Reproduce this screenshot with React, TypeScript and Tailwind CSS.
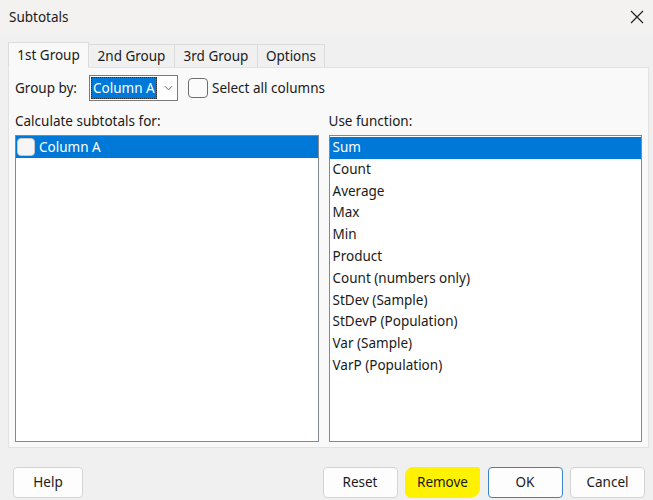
import { useState } from 'react'

const FUNCTIONS = [
  'Sum',
  'Count',
  'Average',
  'Max',
  'Min',
  'Product',
  'Count (numbers only)',
  'StDev (Sample)',
  'StDevP (Population)',
  'Var (Sample)',
  'VarP (Population)',
]

const TABS = [
  ['1st Group', 'w-[81px]'],
  ['2nd Group', 'w-[87px]'],
  ['3rd Group', 'w-[84px]'],
  ['Options', 'w-[68px]'],
]

function Btn({ label, primary = false, marked = false, w = 'w-[75px]' }: { label: string; primary?: boolean; marked?: boolean; w?: string }) {
  return (
    <button
      className={`h-[31px] ${w} rounded-[4px] border text-[13.5px] text-[#1a1a1a] ${
        primary ? 'border-[#3b82c8] bg-[#fdfdfd]' : 'border-[#d4d4d4] bg-[#fdfdfd]'
      } ${marked ? 'bg-[#fff200] border-[#fff200] rounded-[8px_2px_10px_6px]' : ''}`}
    >
      {label}
    </button>
  )
}

export default function App() {
  const [tab, setTab] = useState(0)
  const [fn, setFn] = useState(0)

  return (
    <div
      className="w-[653px] h-[500px] bg-[#f0f0f0] text-[13.5px] text-[#1a1a1a] flex flex-col overflow-hidden"
      style={{ fontFamily: '"Noto Sans", "Open Sans", sans-serif' }}
    >
      {/* title bar */}
      <div className="h-[34px] shrink-0 bg-[#f3f2f1] flex items-center justify-between pl-[9px] pr-[8px]">
        <span className="text-[13.5px]">Subtotals</span>
        <svg viewBox="0 0 16 16" className="w-[16px] h-[16px]" stroke="#222" strokeWidth="1.2" fill="none">
          <path d="M2 2 L14 14 M14 2 L2 14" />
        </svg>
      </div>

      {/* tabs */}
      <div className="flex items-end pl-[8px] h-[33px] shrink-0">
        {TABS.map(([t, w], i) => (
          <button
            key={t}
            onClick={() => setTab(i)}
            className={`${w} border border-[#dcdcdc] text-[13.5px] flex items-center justify-center -ml-px first:ml-0 ${
              tab === i ? 'h-[26px] bg-[#f9f9f9] border-b-[#f9f9f9] z-10 -mb-px' : 'h-[23px] bg-[#f0f0f0] border-b-0'
            }`}
          >
            {t}
          </button>
        ))}
      </div>

      {/* panel */}
      <div className="mx-[8px] w-[641px] h-[381px] shrink-0 bg-[#f9f9f9] border border-[#e2e2e2] flex flex-col px-[6px]">
        <div className="flex items-center h-[26px] mt-[7px]">
          <span className="w-[74px]">Group by:</span>
          <div className="h-[26px] w-[89px] border border-[#7a7a7a] bg-white flex items-center">
            <span className="ml-[1px] h-[22px] pl-[1px] pr-[1px] bg-[#0078d7] text-white border border-dotted border-[#333] leading-[20px]">
              Column A
            </span>
            <svg viewBox="0 0 10 6" className="w-[9px] h-[6px] ml-[7px]" fill="none" stroke="#555" strokeWidth="1">
              <path d="M1 1 L5 5 L9 1" />
            </svg>
          </div>
          <div className="ml-[10px] w-[20px] h-[20px] rounded-[4px] border border-[#6f6f6f] bg-[#fbfbfb]" />
          <span className="ml-[4px]">Select all columns</span>
        </div>

        <div className="flex gap-[10px] mt-[8px]">
          <div className="flex flex-col w-[304px]">
            <span className="h-[24px] leading-[24px]">Calculate subtotals for:</span>
            <div className="mt-[2px] h-[307px] bg-white border border-[#828790]">
              <div className="h-[22px] bg-[#0078d7] text-white flex items-center">
                <div className="ml-[1px] w-[18px] h-[18px] rounded-[4px] border border-[#c8c8c8] bg-[#f6f6f6]" />
                <span className="ml-[4px]">Column A</span>
              </div>
            </div>
          </div>
          <div className="flex flex-col w-[314px]">
            <span className="h-[24px] leading-[24px]">Use function:</span>
            <div className="mt-[2px] h-[307px] bg-white border border-[#828790] pt-px">
              {FUNCTIONS.map((f, i) => (
                <div
                  key={f}
                  onClick={() => setFn(i)}
                  className={`h-[21.8px] leading-[21.8px] pl-[3px] ${fn === i ? 'bg-[#0078d7] text-white' : ''}`}
                >
                  {f}
                </div>
              ))}
            </div>
          </div>
        </div>
      </div>

      {/* buttons */}
      <div className="flex items-center mt-[19px] pl-[13px] pr-[8px]">
        <Btn label="Help" w="w-[70px]" />
        <div className="flex-1" />
        <div className="flex gap-[7.5px]">
          <Btn label="Reset" />
          <Btn label="Remove" marked />
          <Btn label="OK" primary />
          <Btn label="Cancel" />
        </div>
      </div>
    </div>
  )
}
